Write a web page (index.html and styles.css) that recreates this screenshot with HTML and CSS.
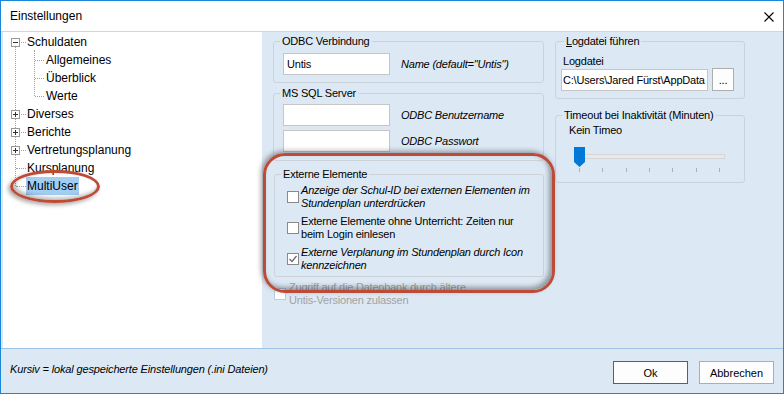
FILE: index.html
```html
<!DOCTYPE html>
<html lang="de">

<head>
  <meta charset="UTF-8">
  <meta name="viewport" content="width=device-width, initial-scale=1.0">
  <title>Einstellungen</title>
  <link rel="stylesheet" href="styles.css">
</head>

<body>
  <div class="window">
    <header class="titlebar">
      <span class="title">Einstellungen</span>
      <span class="close">
        <svg width="10" height="10" viewBox="0 0 10 10">
          <path d="M0.5 0.5 L9.5 9.5 M9.5 0.5 L0.5 9.5" stroke="#000" stroke-width="1.1" fill="none" />
        </svg>
      </span>
    </header>

    <div class="content">
      <nav class="tree-pane">
        <ul class="tree">
          <li>
            <div class="row"><span class="gutter"><span class="toggle minus"></span></span><span class="label">Schuldaten</span></div>
            <ul class="children">
              <li class="row child"><span class="label">Allgemeines</span></li>
              <li class="row child"><span class="label">Überblick</span></li>
              <li class="row child"><span class="label">Werte</span></li>
            </ul>
          </li>
          <li>
            <div class="row"><span class="gutter"><span class="toggle plus"></span></span><span class="label">Diverses</span></div>
          </li>
          <li>
            <div class="row"><span class="gutter"><span class="toggle plus"></span></span><span class="label">Berichte</span></div>
          </li>
          <li>
            <div class="row"><span class="gutter"><span class="toggle plus"></span></span><span class="label">Vertretungsplanung</span></div>
          </li>
          <li>
            <div class="row"><span class="gutter"></span><span class="label">Kursplanung</span></div>
          </li>
          <li>
            <div class="row"><span class="gutter"></span><span class="label selected">MultiUser</span></div>
          </li>
        </ul>
      </nav>

      <main class="settings">
        <div class="col-main">
          <fieldset class="group odbc">
            <legend>ODBC Verbindung</legend>
            <div class="field">
              <div class="textbox">Untis</div>
              <em>Name (default="Untis")</em>
            </div>
          </fieldset>

          <fieldset class="group sql">
            <legend>MS SQL Server</legend>
            <div class="field">
              <div class="textbox"></div>
              <em>ODBC Benutzername</em>
            </div>
            <div class="field">
              <div class="textbox"></div>
              <em>ODBC Passwort</em>
            </div>
          </fieldset>

          <fieldset class="group extern">
            <legend>Externe Elemente</legend>
            <label class="check">
              <span class="box"></span>
              <em>Anzeige der Schul-ID bei externen Elementen im<br>Stundenplan unterdrücken</em>
            </label>
            <label class="check">
              <span class="box"></span>
              <span>Externe Elemente ohne Unterricht: Zeiten nur<br>beim Login einlesen</span>
            </label>
            <label class="check">
              <span class="box checked">
                <svg width="10" height="10" viewBox="0 0 10 10">
                  <path d="M1.5 5 L4 7.5 L8.5 2" stroke="#6d6d6d" stroke-width="1.3" fill="none" />
                </svg>
              </span>
              <em>Externe Verplanung im Stundenplan durch Icon<br>kennzeichnen</em>
            </label>
          </fieldset>

          <label class="check disabled">
            <span class="box"></span>
            <span>Zugriff auf die Datenbank durch ältere<br>Untis-Versionen zulassen</span>
          </label>
        </div>

        <div class="col-side">
          <fieldset class="group logfile">
            <legend><u>L</u>ogdatei führen</legend>
            <div class="caption">Logdatei</div>
            <div class="path-row">
              <div class="textbox path">C:\Users\Jared Fürst\AppData</div>
              <div class="browse">...</div>
            </div>
          </fieldset>

          <fieldset class="group timeout">
            <legend>Timeout bei Inaktivität (Minuten)</legend>
            <div class="caption value">Kein Timeo</div>
            <div class="slider">
              <span class="track"></span>
              <svg class="thumb" width="11" height="20" viewBox="0 0 11 20">
                <polygon points="0,0 11,0 11,15 5.5,20 0,15" fill="#0078d7" />
              </svg>
            </div>
            <div class="ticks">
              <span></span><span></span><span></span><span></span><span></span><span></span><span></span>
            </div>
          </fieldset>
        </div>
      </main>
    </div>

    <footer class="footer">
      <span class="note">Kursiv = lokal gespeicherte Einstellungen (.ini Dateien)</span>
      <div class="buttons">
        <button type="button" class="btn default">Ok</button>
        <button type="button" class="btn">Abbrechen</button>
      </div>
    </footer>

    <!-- Markierungen -->
    <span class="mark mark-tree"></span>
    <span class="mark mark-group"></span>
  </div>
</body>

</html>
```

FILE: styles.css
```css
* {
  margin: 0;
  padding: 0;
  box-sizing: border-box;

  font-family: "Liberation Sans", Arial, sans-serif;
}

body {
  width: 784px;
  height: 394px;
  overflow: hidden;
  background: #fff;
}

.window {
  position: relative;
  display: flex;
  flex-direction: column;

  width: 784px;
  height: 394px;
  border: 1px solid #1a86d9;
  background: #dce9f5;
  color: #000;
}

.titlebar {
  display: flex;
  align-items: center;
  justify-content: space-between;

  height: 30px;
  padding: 0 9px;
  background: #fff;
  font-size: 12px;
}

.close {
  display: flex;
  padding-top: 1px;
}

.content {
  display: flex;
  height: 317px;
  border-top: 1px solid #c4d8ec;
}

/* Baum */

.tree-pane {
  width: 259px;
  margin-left: 2px;
  padding-top: 1px;
  background: #fff;
  font-size: 12px;
}

.tree,
.children {
  position: relative;
  list-style: none;
}

.tree::before {
  content: '';
  position: absolute;
  left: 12px;
  top: 10px;
  bottom: 9px;
  border-left: 1px dotted #a0a0a0;
}

.children::before {
  content: '';
  position: absolute;
  left: 31px;
  top: -1px;
  bottom: 9px;
  border-left: 1px dotted #a0a0a0;
}

.row {
  position: relative;
  display: flex;
  align-items: center;

  height: 18px;
  padding-left: 8px;
}

.row::before {
  content: '';
  position: absolute;
  left: 13px;
  top: 9px;
  width: 10px;
  border-top: 1px dotted #a0a0a0;
}

.row.child {
  padding-left: 42px;
}

.row.child::before {
  left: 32px;
  width: 9px;
}

.gutter {
  position: relative;
  width: 9px;
  height: 9px;
  margin-right: 6px;
}

.toggle {
  position: absolute;
  inset: 0;
  border: 1px solid #999;
  background: #fff;
}

.toggle::before,
.toggle::after {
  content: '';
  position: absolute;
  background: #333;
}

.toggle::before {
  left: 1px;
  top: 3px;
  width: 5px;
  height: 1px;
}

.toggle.plus::after {
  left: 3px;
  top: 1px;
  width: 1px;
  height: 5px;
}

.label {
  padding: 0 1px;
  line-height: 18px;
  white-space: nowrap;
}

.label.selected {
  background: #a3cdf1;
}

/* Einstellungen */

.settings {
  flex: 1;
  display: flex;
  gap: 11px;
  padding: 3px 0 0 11px;
  font-size: 11px;
  letter-spacing: -0.2px;
}

.settings em {
  font-style: italic;
}

.col-main {
  display: flex;
  flex-direction: column;
  width: 271px;
}

.col-side {
  display: flex;
  flex-direction: column;
  width: 190px;
}

.group {
  border: 1px solid #cbd2d9;
  border-radius: 3px;
  padding: 6px 9px 7px;
}

.group legend {
  padding: 0 2px;
  margin-left: -3px;
  line-height: 12px;
}

.field {
  display: flex;
  align-items: center;
}

.field em {
  margin-left: 11px;
}

.textbox {
  width: 107px;
  height: 22px;
  padding: 0 3px;
  border: 1px solid #c6c6c6;
  background: #fff;
  line-height: 20px;
  white-space: nowrap;
  overflow: hidden;
}

.sql {
  display: flex;
  flex-direction: column;
  gap: 4px;
  margin-top: 4px;
  padding: 5px 9px 8px;
}

.extern {
  margin-top: 7px;
  margin-left: 1px;
  padding: 4px 9px 4px 12px;
}

.extern legend {
  margin-left: -6px;
}

.check {
  display: flex;
  align-items: center;
  line-height: 13px;
  white-space: nowrap;
}

.check + .check {
  margin-top: 5px;
}

.box {
  display: flex;
  align-items: center;
  justify-content: center;

  flex: none;
  width: 12px;
  height: 12px;
  margin-right: 2px;
  border: 1px solid #8a8a8a;
  background: #fff;
}

.check.disabled {
  margin-top: 4px;
  margin-left: 1px;
  color: #a3a3a3;
}

.check.disabled .box {
  margin-right: 3px;
  border-color: #b6cde4;
}

.logfile {
  padding: 8px 5px 7px;
}

.logfile legend {
  margin-left: 3px;
}

.caption {
  margin-left: 2px;
  line-height: 13px;
}

.path-row {
  display: flex;
  align-items: flex-start;
}

.textbox.path {
  width: 147px;
  margin-top: 1px;
  padding: 0 1px;
}

.browse {
  display: flex;
  align-items: flex-end;
  justify-content: center;

  width: 22px;
  height: 23px;
  margin-left: 4px;
  padding-bottom: 4px;
  border: 1px solid #adadad;
  background: #fdfdfd;
  line-height: 11px;
}

.timeout {
  margin-top: 10px;
  padding: 3px 9px 10px;
}

.caption.value {
  margin-left: 4px;
}

.slider {
  position: relative;
  width: 151px;
  height: 20px;
  margin: 10px 0 0 9px;
}

.track {
  position: absolute;
  left: 0;
  right: 0;
  top: 7px;
  height: 5px;
  border: 1px solid #d6d6d6;
  background: #e7eaec;
}

.thumb {
  position: absolute;
  left: 0;
  top: 0;
}

.ticks {
  display: flex;
  justify-content: space-between;

  width: 151px;
  height: 4px;
  margin: 1px 0 0 9px;
  padding: 0 5px;
}

.ticks span {
  width: 1px;
  background: #b0b0b0;
}

/* Fusszeile */

.footer {
  display: flex;
  align-items: flex-start;

  height: 45px;
  padding: 12px 9px 0;
  border-top: 1px solid #9dc3e6;
  font-size: 11px;
}

.note {
  margin-top: 2px;
  font-style: italic;
  line-height: 13px;
  letter-spacing: -0.15px;
}

.buttons {
  display: flex;
  gap: 11px;
  margin-left: auto;
}

.btn {
  width: 75px;
  height: 23px;
  border: 1px solid #adadad;
  background: #fdfdfd;
  font-size: 11px;
  color: #000;
}

.btn.default {
  border-color: #0078d7;
}

/* rote Markierungen */

.mark {
  position: absolute;
  border: 3px solid #bd4b37;
  pointer-events: none;
}

.mark-tree {
  left: 9px;
  top: 169px;
  width: 90px;
  height: 33px;
  border-radius: 50%;
  box-shadow: -2px 2px 4px rgba(0, 0, 0, 0.35), inset 2px -2px 4px rgba(0, 0, 0, 0.3);
}

.mark-group {
  left: 262px;
  top: 152px;
  width: 292px;
  height: 140px;
  border-radius: 22px;
  box-shadow: -2px -2px 5px rgba(0, 0, 0, 0.35), inset -3px -3px 5px rgba(0, 0, 0, 0.35);
}
```
